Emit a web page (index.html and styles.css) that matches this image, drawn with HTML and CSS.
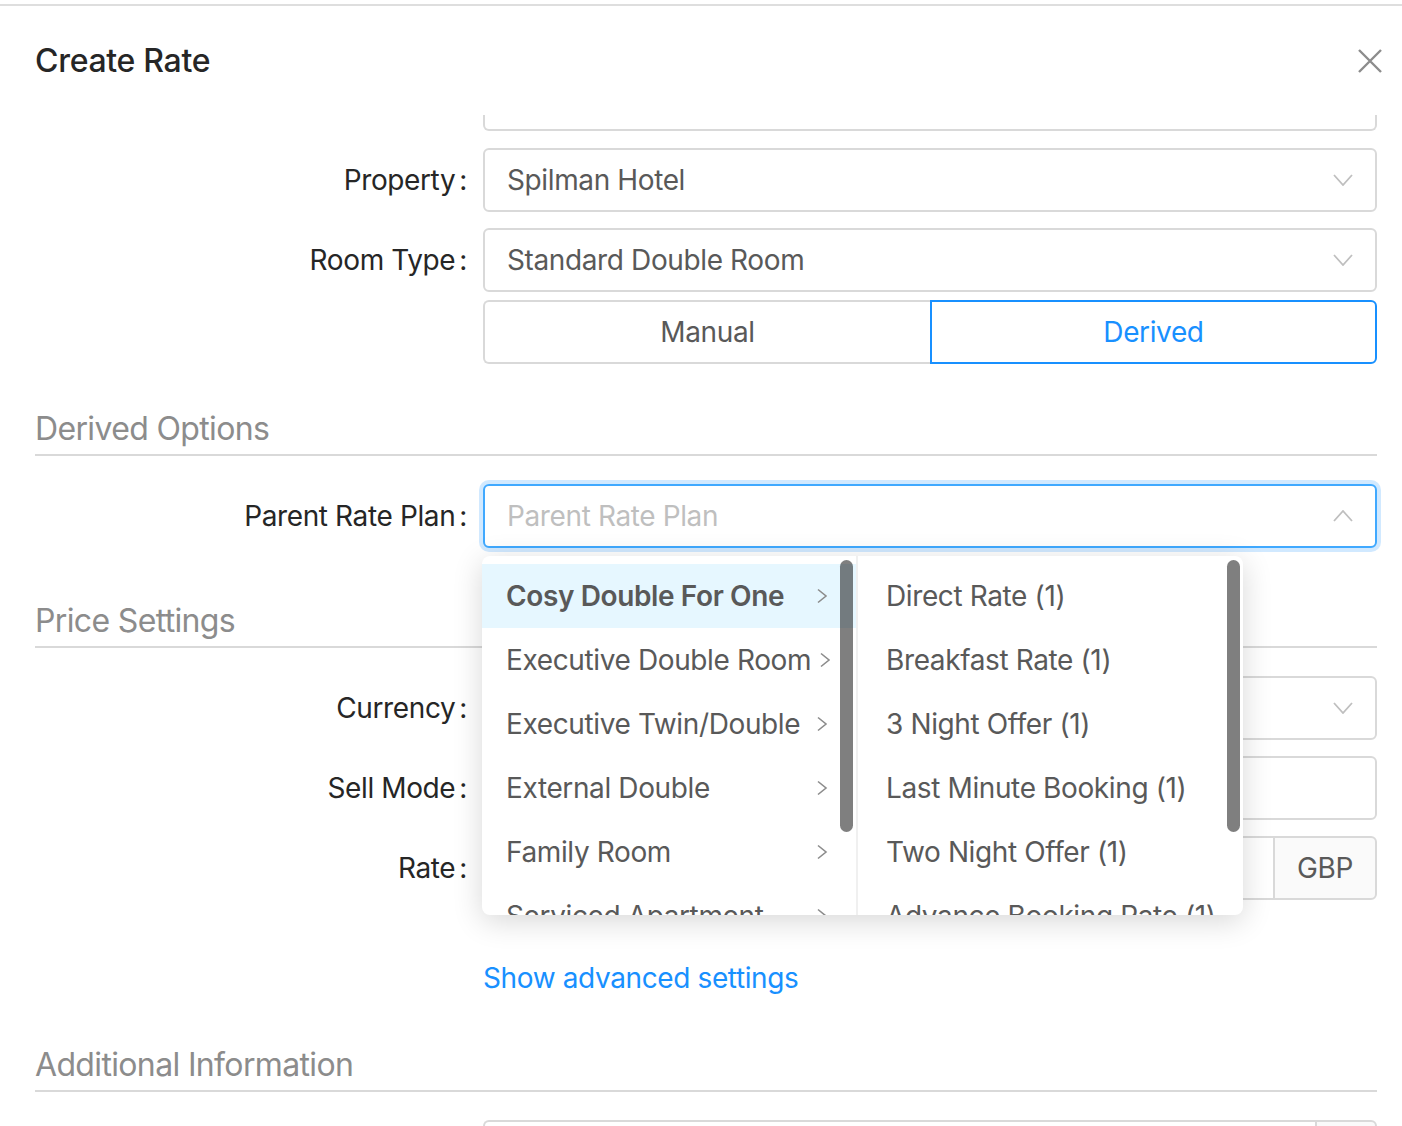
FILE: index.html
```html
<!DOCTYPE html>
<html lang="en">
<head>
<meta charset="utf-8">
<title>Create Rate</title>
<link rel="stylesheet" href="styles.css">
</head>
<body>
<div class="topline"></div>
<div class="modal">
  <header class="modal-header">
    <h1 class="modal-title">Create Rate</h1>
    <button class="close" aria-label="Close">
      <svg width="24" height="24" viewBox="0 0 24 24"><path d="M1 1 L23 23 M23 1 L1 23" stroke="#8c8c8c" stroke-width="2.4" fill="none"/></svg>
    </button>
  </header>
  <div class="modal-body">
    <div class="row row-partial"><div></div><div class="partial"></div></div>

    <div class="row">
      <div class="label">Property<span class="colon">:</span></div>
      <div class="field">
        <span>Spilman Hotel</span>
        <svg class="arrow" width="20" height="12" viewBox="0 0 20 12"><path d="M1 1 L10 11 L19 1" stroke="#bfbfbf" stroke-width="1.8" fill="none"/></svg>
      </div>
    </div>

    <div class="row tight">
      <div class="label">Room Type<span class="colon">:</span></div>
      <div class="field">
        <span>Standard Double Room</span>
        <svg class="arrow" width="20" height="12" viewBox="0 0 20 12"><path d="M1 1 L10 11 L19 1" stroke="#bfbfbf" stroke-width="1.8" fill="none"/></svg>
      </div>
    </div>

    <div class="row tight">
      <div></div>
      <div class="seg">
        <div class="seg-btn seg-left">Manual</div>
        <div class="seg-btn seg-active">Derived</div>
      </div>
    </div>

    <h2 class="section">Derived Options</h2>

    <div class="row">
      <div class="label">Parent Rate Plan<span class="colon">:</span></div>
      <div class="ctrl">
        <div class="field focused">
          <span class="placeholder">Parent Rate Plan</span>
          <svg class="arrow" width="20" height="12" viewBox="0 0 20 12"><path d="M1 11 L10 1 L19 11" stroke="#bfbfbf" stroke-width="1.8" fill="none"/></svg>
        </div>
        <div class="cascader">
          <div class="menu menu1">
            <div class="item active"><span>Cosy Double For One</span><svg class="chev" width="12" height="16" viewBox="0 0 12 16"><path d="M2 1.5 L10 8 L2 14.5" stroke="#8c8c8c" stroke-width="1.6" fill="none"/></svg></div>
            <div class="item"><span>Executive Double Room</span><svg class="chev" width="12" height="16" viewBox="0 0 12 16"><path d="M2 1.5 L10 8 L2 14.5" stroke="#8c8c8c" stroke-width="1.6" fill="none"/></svg></div>
            <div class="item"><span>Executive Twin/Double</span><svg class="chev" width="12" height="16" viewBox="0 0 12 16"><path d="M2 1.5 L10 8 L2 14.5" stroke="#8c8c8c" stroke-width="1.6" fill="none"/></svg></div>
            <div class="item"><span>External Double</span><svg class="chev" width="12" height="16" viewBox="0 0 12 16"><path d="M2 1.5 L10 8 L2 14.5" stroke="#8c8c8c" stroke-width="1.6" fill="none"/></svg></div>
            <div class="item"><span>Family Room</span><svg class="chev" width="12" height="16" viewBox="0 0 12 16"><path d="M2 1.5 L10 8 L2 14.5" stroke="#8c8c8c" stroke-width="1.6" fill="none"/></svg></div>
            <div class="item"><span>Serviced Apartment</span><svg class="chev" width="12" height="16" viewBox="0 0 12 16"><path d="M2 1.5 L10 8 L2 14.5" stroke="#8c8c8c" stroke-width="1.6" fill="none"/></svg></div>
            <div class="scroll"></div>
          </div>
          <div class="menu menu2">
            <div class="item"><span>Direct Rate (1)</span></div>
            <div class="item"><span>Breakfast Rate (1)</span></div>
            <div class="item"><span>3 Night Offer (1)</span></div>
            <div class="item"><span>Last Minute Booking (1)</span></div>
            <div class="item"><span>Two Night Offer (1)</span></div>
            <div class="item"><span>Advance Booking Rate (1)</span></div>
            <div class="scroll"></div>
          </div>
        </div>
      </div>
    </div>

    <h2 class="section">Price Settings</h2>

    <div class="row">
      <div class="label">Currency<span class="colon">:</span></div>
      <div class="field">
        <span></span>
        <svg class="arrow" width="20" height="12" viewBox="0 0 20 12"><path d="M1 1 L10 11 L19 1" stroke="#bfbfbf" stroke-width="1.8" fill="none"/></svg>
      </div>
    </div>

    <div class="row">
      <div class="label">Sell Mode<span class="colon">:</span></div>
      <div class="field"></div>
    </div>

    <div class="row">
      <div class="label">Rate<span class="colon">:</span></div>
      <div class="group">
        <div class="field field-grouped"></div>
        <div class="addon">GBP</div>
      </div>
    </div>

    <div class="row link-row">
      <div></div>
      <div><a class="link" href="#">Show advanced settings</a></div>
    </div>

    <h2 class="section">Additional Information</h2>

    <div class="row">
      <div></div>
      <div class="group">
        <div class="field field-grouped"></div>
        <div class="addon addon-small"></div>
      </div>
    </div>
  </div>
</div>
</body>
</html>
```

FILE: styles.css
```css
html, body {
  margin: 0;
  padding: 0;
  overflow: hidden;
  background: #fff;
}
body {
  height: 1126px;
  font-family: Inter, "Liberation Sans", Arial, sans-serif;
  font-size: 28px;
  line-height: 42px;
  letter-spacing: -0.38px;
  color: #595959;
}
.topline {
  height: 2px;
  margin-top: 4px;
  background: #dedede;
}
.modal-header {
  height: 109px;
  display: flex;
  align-items: center;
  justify-content: space-between;
  padding: 0 20px 0 35px;
}
.modal-title {
  margin: 0;
  font-size: 32px;
  line-height: 48px;
  font-weight: 500;
  letter-spacing: -0.3px;
  color: #262626;
}
.close {
  width: 24px;
  height: 24px;
  padding: 0;
  border: none;
  background: none;
  display: block;
}
.close svg { display: block; }

.modal-body {
  display: flex;
  flex-direction: column;
  padding: 0 25px 0 35px;
}
.row {
  display: grid;
  grid-template-columns: 448px 1fr;
  margin-bottom: 16px;
}
.row.tight { margin-bottom: 8px; }
.row-partial { margin-bottom: 17px; }
.partial {
  height: 16px;
  box-sizing: border-box;
  border: 2px solid #d9d9d9;
  border-top: none;
  border-radius: 0 0 6px 6px;
}
.label {
  display: flex;
  align-items: center;
  justify-content: flex-end;
  padding-right: 16px;
  color: #262626;
  white-space: nowrap;
}
.colon { margin-left: 4px; }

.field {
  height: 64px;
  box-sizing: border-box;
  border: 2px solid #d9d9d9;
  border-radius: 6px;
  background: #fff;
  display: flex;
  align-items: center;
  justify-content: space-between;
  padding: 0 22px;
}
.arrow { display: block; flex: none; }
.field.focused {
  border-color: #40a9ff;
  box-shadow: 0 0 0 4px rgba(24, 144, 255, 0.2);
}
.placeholder { color: #bfbfbf; }

.seg {
  display: grid;
  grid-template-columns: 1fr 1fr;
  height: 64px;
}
.seg-btn {
  display: flex;
  align-items: center;
  justify-content: center;
  box-sizing: border-box;
  border: 2px solid #d9d9d9;
}
.seg-left {
  border-right: none;
  border-radius: 6px 0 0 6px;
  color: #595959;
}
.seg-active {
  border-color: #1890ff;
  border-radius: 0 6px 6px 0;
  color: #1890ff;
}

.section {
  margin: 33px 0 28px;
  padding-bottom: 1px;
  font-size: 32px;
  line-height: 48px;
  font-weight: 400;
  letter-spacing: -0.65px;
  color: #8c8c8c;
  border-bottom: 2px solid #d9d9d9;
}

.ctrl { position: relative; }
.cascader {
  position: absolute;
  top: 72px;
  left: -1px;
  width: 761px;
  height: 359px;
  display: flex;
  background: #fff;
  border-radius: 8px;
  box-shadow: 0 6px 30px rgba(0, 0, 0, 0.16);
  overflow: hidden;
  z-index: 10;
}
.menu {
  position: relative;
  box-sizing: border-box;
  padding-top: 8px;
  height: 100%;
  overflow: hidden;
}
.menu1 {
  width: 376px;
  flex: none;
  border-right: 2px solid #f0f0f0;
}
.menu2 { flex: 1; }
.item {
  height: 64px;
  flex: none;
  display: flex;
  align-items: center;
  justify-content: space-between;
  padding: 0 28px 0 24px;
  white-space: nowrap;
  color: #595959;
}
.menu2 .item { padding-left: 28px; }
.item.active {
  background: #e6f7ff;
  font-weight: 600;
}
.chev { display: block; flex: none; margin-left: 8px; }
.scroll {
  position: absolute;
  top: 4px;
  right: 3px;
  width: 13px;
  height: 272px;
  border-radius: 7px;
  background: rgba(0, 0, 0, 0.5);
}

.group {
  display: flex;
  height: 64px;
}
.field-grouped {
  flex: 1;
  border-right: none;
  border-radius: 6px 0 0 6px;
}
.addon {
  width: 104px;
  box-sizing: border-box;
  border: 2px solid #d9d9d9;
  border-radius: 0 6px 6px 0;
  background: #fafafa;
  display: flex;
  align-items: center;
  justify-content: center;
  color: #595959;
}
.addon-small { width: 62px; }

.link-row {
  margin: 41px 0 9px;
}
.link {
  color: #1890ff;
  text-decoration: none;
}
```
